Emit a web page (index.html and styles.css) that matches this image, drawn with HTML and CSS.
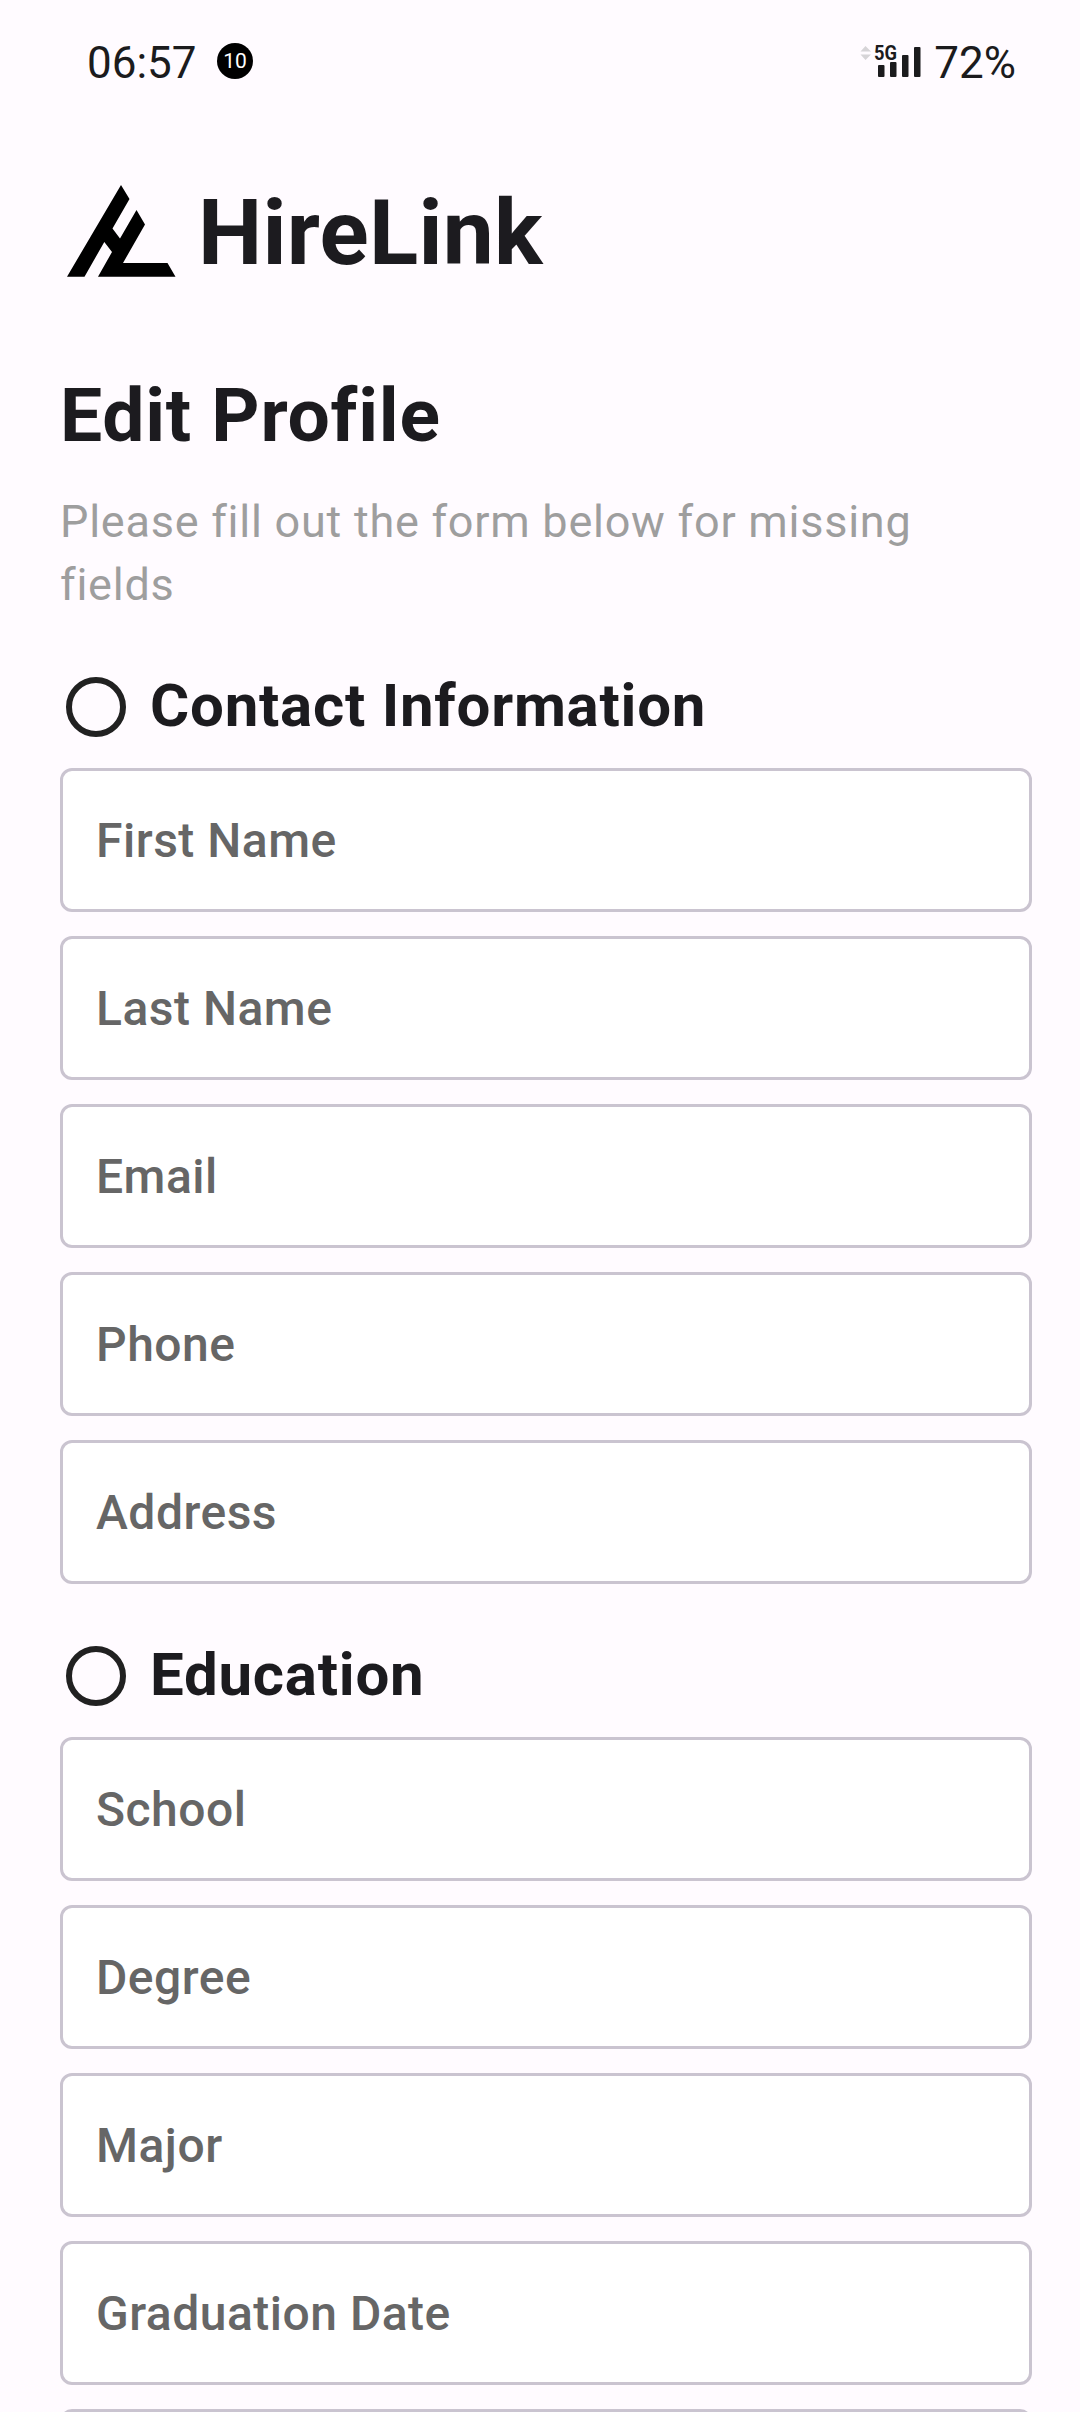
FILE: index.html
```html
<!DOCTYPE html>
<html lang="en">
<head>
<meta charset="utf-8">
<title>HireLink - Edit Profile</title>
<link rel="stylesheet" href="styles.css">
</head>
<body>
<header class="status">
  <span class="clock">06:57</span>
  <span class="badge">10</span>
  <svg class="signal" viewBox="0 0 62 34" width="62" height="34">
    <path fill="#d6d4d7" d="M0.5 7.5 5.5 2 11 7.5zM0.5 10.5H11L5.5 16z"/>
    <text class="net" x="14" y="16" textLength="23" lengthAdjust="spacingAndGlyphs">5G</text>
    <g fill="#1b1b1d">
      <rect x="18" y="21" width="6.5" height="12" rx="1"/>
      <rect x="30" y="18" width="6.5" height="15" rx="1"/>
      <rect x="42" y="11" width="6.5" height="22" rx="1"/>
      <rect x="54" y="3" width="6.5" height="30" rx="1"/>
    </g>
  </svg>
  <span class="battery">72%</span>
</header>
<main class="page">
  <div class="brand">
    <svg class="logo" viewBox="67 185 109 92" width="109" height="92">
      <path d="M121 185 129.5 199 112.5 228.5 120 238.5 136.5 210 145 224.5 123 263H167.5L175.5 276.7H98L112 252 104.3 242 84.5 276.7H67Z"/>
    </svg>
    <span class="brand-name">HireLink</span>
  </div>
  <h1 class="title">Edit Profile</h1>
  <p class="lead">Please fill out the form below for missing fields</p>
  <section class="group">
    <h2 class="heading"><span class="ring"></span>Contact Information</h2>
    <div class="field">First Name</div>
    <div class="field">Last Name</div>
    <div class="field">Email</div>
    <div class="field">Phone</div>
    <div class="field">Address</div>
  </section>
  <section class="group">
    <h2 class="heading"><span class="ring"></span>Education</h2>
    <div class="field">School</div>
    <div class="field">Degree</div>
    <div class="field">Major</div>
    <div class="field">Graduation Date</div>
    <div class="field"></div>
  </section>
</main>
</body>
</html>
```
FILE: styles.css
```css
* { box-sizing: border-box; }
body {
  margin: 0;
  height: 2412px;
  overflow: hidden;
  background: #fffbff;
  color: #1c1b1f;
  font-family: Roboto, sans-serif;
}
.status {
  display: flex;
  align-items: center;
  height: 122px;
  padding: 0 64px 0 87px;
  color: #1b1b1d;
}
.clock, .battery {
  margin-top: 3px;
  font-size: 44px;
  line-height: 50px;
}
.clock { width: 130px; }
.badge {
  width: 36px;
  height: 36px;
  border-radius: 50%;
  background: #000;
  color: #fff;
  font-size: 21px;
  line-height: 36px;
  text-align: center;
}
.signal {
  margin: 0 12px 0 auto;
  overflow: visible;
}
.net { font-size: 21px; font-weight: 700; fill: #1b1b1d; }
.page { padding: 0 48px 0 60px; }
.brand {
  display: flex;
  align-items: center;
  height: 218px;
  padding: 0 0 0 7px;
}
.logo { display: block; }
.brand-name {
  margin: 4px 0 0 22px;
  font-size: 91px;
  font-weight: 700;
  line-height: 106px;
  letter-spacing: 0.25px;
}
.title {
  margin: 30px 0 0;
  font-size: 75px;
  font-weight: 700;
  line-height: 90px;
  letter-spacing: 0.75px;
}
.lead {
  margin: 30px 0 0;
  color: #9e9e9e;
  font-size: 45px;
  line-height: 63px;
  letter-spacing: 0.75px;
}
.group {
  display: flex;
  flex-direction: column;
  gap: 24px;
  margin-top: 54px;
}
.group + .group { margin-top: 55px; }
.heading {
  display: flex;
  align-items: flex-start;
  gap: 24px;
  height: 74px;
  margin: 0;
  padding-left: 6px;
  font-size: 60px;
  font-weight: 700;
  line-height: 71px;
  letter-spacing: 0.75px;
}
.ring {
  width: 60px;
  height: 60px;
  margin-top: 7px;
  border: 6px solid #212121;
  border-radius: 50%;
}
.field {
  flex: none;
  height: 144px;
  padding: 0 33px;
  border: 3px solid #cac4d0;
  border-radius: 12px;
  background: #fff;
  color: #666;
  font-size: 48px;
  font-weight: 500;
  line-height: 140px;
  letter-spacing: 0.5px;
}
```
